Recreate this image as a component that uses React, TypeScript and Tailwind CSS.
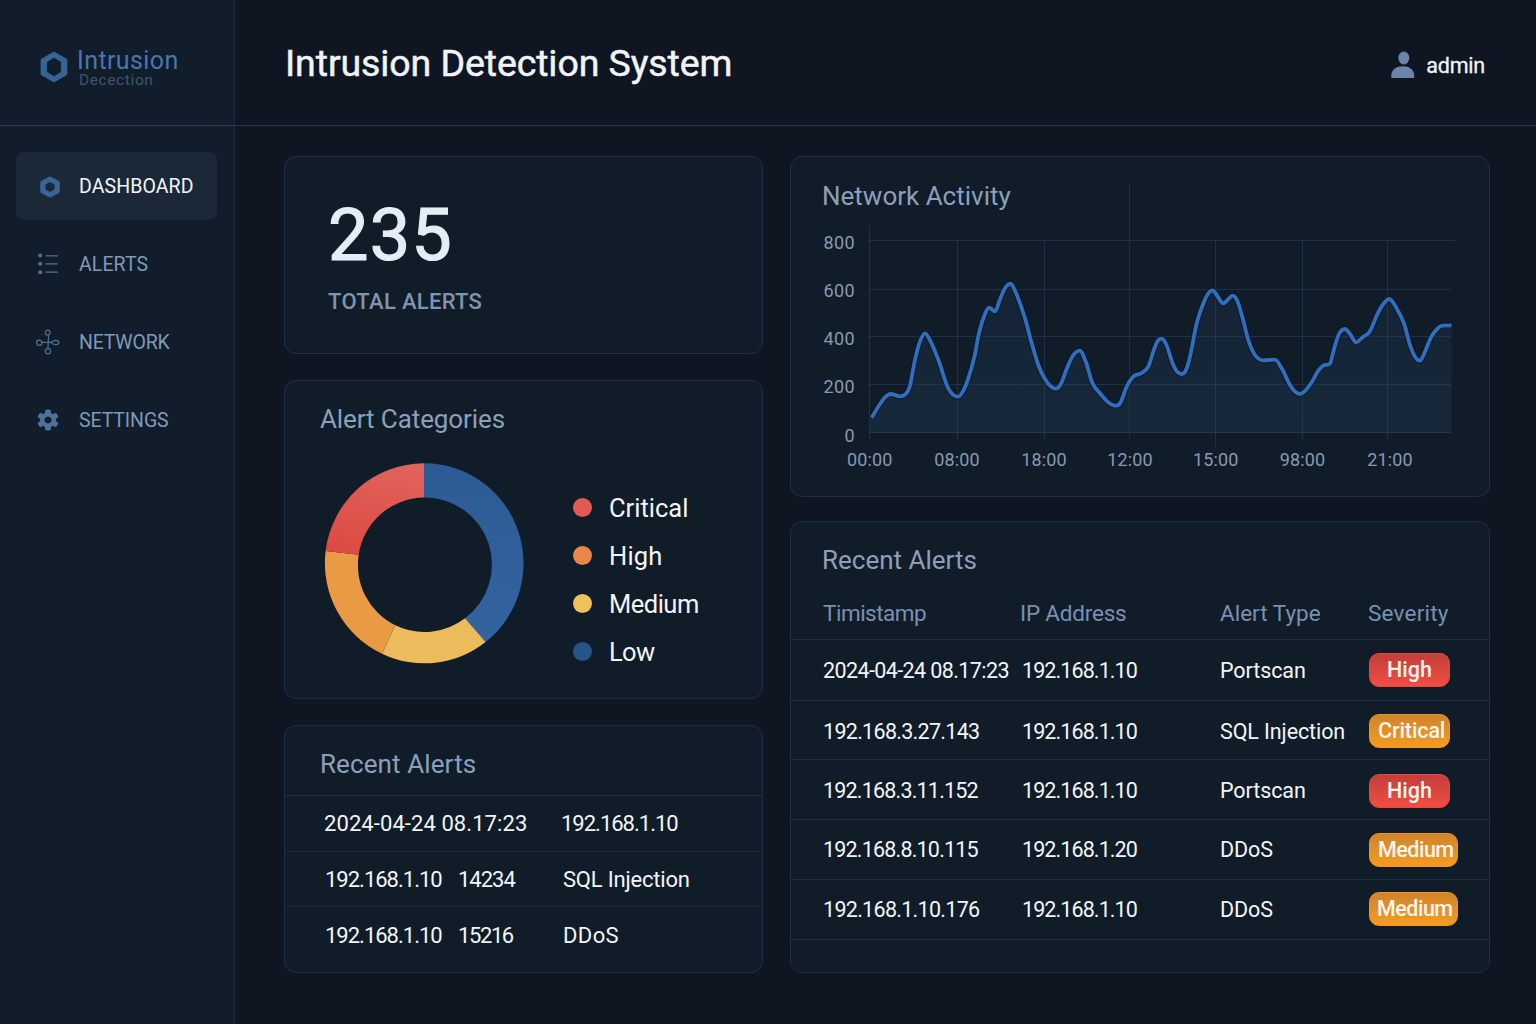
import type { ReactNode } from "react";

type Point = [number, number];

const activity: Point[] = [
  [871.7, 417.7], [880, 404], [885, 397.3], [890.7, 394], [900, 396.3], [905.7, 394], [909.7, 386.7], [915, 360],
  [919.3, 343.3], [925, 333.3], [930.7, 341.7], [939, 361.7], [947.7, 387.3], [952.7, 394.3], [958.3, 396.7],
  [963.3, 390.7], [968.3, 378.3], [974.3, 357.3], [979.3, 331.7], [985, 314], [989, 307.7], [995, 311.3],
  [1000, 299.3], [1005, 288.3], [1010.7, 283.7], [1015, 290.7], [1025, 318.3], [1031.7, 343.3], [1038.3, 365],
  [1045, 379], [1050.7, 386.3], [1056, 388.7], [1060.7, 384.3], [1066.7, 369], [1072.3, 356.7], [1079.7, 350.7],
  [1086, 362.3], [1092.3, 382.7], [1100, 393.3], [1108.3, 402.3], [1115, 405.7], [1120, 403.3], [1126.7, 386.7],
  [1133.3, 376.7], [1141.7, 373], [1148.3, 366.7], [1153.3, 351.7], [1157.3, 341.7], [1161.3, 338.7], [1166, 344],
  [1173.3, 365], [1177.3, 371.7], [1181.7, 374], [1185.7, 370.7], [1190, 356.7], [1196.7, 323.3], [1204, 301.7],
  [1208.3, 293.3], [1212.7, 290.3], [1216.7, 295], [1223.3, 303.3], [1228.3, 299.3], [1232.3, 295.7],
  [1237.3, 300.7], [1242.7, 318.3], [1248.3, 340], [1255, 355], [1263.3, 360.3], [1275, 359.7], [1281.7, 368.3],
  [1290, 385], [1295, 391.7], [1300, 394], [1304.3, 391.7], [1311.7, 382.3], [1318.3, 370.7], [1323.3, 365.7],
  [1330, 363.7], [1333.3, 351.7], [1339, 334], [1345, 329], [1350, 334], [1356, 342.3], [1363.3, 336.7],
  [1369.3, 332.3], [1377.3, 314.3], [1383.3, 304], [1389.3, 299], [1395.7, 306.7], [1404.3, 324.3], [1410, 345],
  [1415, 356.7], [1420, 360.7], [1425, 351.7], [1431, 337.3], [1436.7, 329.3], [1442.3, 325.7], [1451.5, 325.3],
];

// Monotone cubic interpolation, so peaks and troughs stay on their data points.
function smoothPath(pts: Point[]): string {
  const n = pts.length;
  const slope = (i: number) => (pts[i + 1][1] - pts[i][1]) / (pts[i + 1][0] - pts[i][0]);
  const tangents = pts.map((_, i) => {
    if (i === 0) return slope(0);
    if (i === n - 1) return 0;
    const a = slope(i - 1);
    const b = slope(i);
    if (a * b <= 0) return 0;
    const m = (a + b) / 2;
    const limit = 3 * Math.min(Math.abs(a), Math.abs(b));
    return Math.sign(m) * Math.min(Math.abs(m), limit);
  });
  let d = `M${pts[0][0]},${pts[0][1]}`;
  for (let i = 0; i < n - 1; i++) {
    const [x0, y0] = pts[i];
    const [x1, y1] = pts[i + 1];
    const h = (x1 - x0) / 3;
    d += `C${x0 + h},${y0 + tangents[i] * h} ${x1 - h},${y1 - tangents[i + 1] * h} ${x1},${y1}`;
  }
  return d;
}

const line = smoothPath(activity);
const area = `${line}L1451.5,433L870,433L870,420Z`;

const yTicks = [
  { label: "800", line: 240.5, base: 249, end: 1455 },
  { label: "600", line: 289.5, base: 297, end: 1451 },
  { label: "400", line: 336.5, base: 345.3, end: 1451 },
  { label: "200", line: 384.5, base: 393.3, end: 1451 },
  { label: "0", line: 432.5, base: 442.3, end: 1451 },
];

const xTicks = [
  { label: "00:00", x: 869.5, top: 225, bottom: 439, center: 869.7 },
  { label: "08:00", x: 957.5, top: 240, bottom: 439, center: 957 },
  { label: "18:00", x: 1044.5, top: 240, bottom: 439, center: 1044 },
  { label: "12:00", x: 1129.5, top: 184, bottom: 439, center: 1130 },
  { label: "15:00", x: 1215.5, top: 240, bottom: 447, center: 1215.7 },
  { label: "98:00", x: 1302.5, top: 240, bottom: 439, center: 1302.5 },
  { label: "21:00", x: 1387.5, top: 240, bottom: 439, center: 1390 },
];

function ActivityChart() {
  return (
    <svg className="block h-[296px] w-[698px]" viewBox="791 180 698 296" fill="none">
      <defs>
        <linearGradient id="area" x1="0" y1="283" x2="0" y2="433" gradientUnits="userSpaceOnUse">
          <stop offset="0" stopColor="#142336" />
          <stop offset="1" stopColor="#18283b" />
        </linearGradient>
      </defs>
      <path d={area} fill="url(#area)" />
      <g stroke="#2a4365" strokeOpacity="0.55">
        {yTicks.map((t) => (
          <path key={t.label} d={`M869,${t.line}H${t.end}`} />
        ))}
        {xTicks.map((t) => (
          <path key={t.label} d={`M${t.x},${t.top}V${t.bottom}`} strokeOpacity={t.top < 200 ? 0.45 : 0.55} />
        ))}
      </g>
      <path d={line} stroke="#0d1520" strokeWidth="6" strokeOpacity="0.6" />
      <path d={line} stroke="#2f6fbe" strokeWidth="3.8" />
      <g fill="#849ab5" fontSize="18">
        {yTicks.map((t) => (
          <text key={t.label} x="855" y={t.base} textAnchor="end" letterSpacing="0.4">
            {t.label}
          </text>
        ))}
        {xTicks.map((t) => (
          <text key={t.label} x={t.center} y="466" textAnchor="middle" letterSpacing="0.1">
            {t.label}
          </text>
        ))}
      </g>
    </svg>
  );
}

function Donut() {
  return (
    <svg className="block h-[202px] w-[200px]" viewBox="324 462 200 202">
      <defs>
        <linearGradient id="red" x1="0.6" y1="0" x2="0.3" y2="1">
          <stop offset="0" stopColor="#e0625a" />
          <stop offset="1" stopColor="#dd4a43" />
        </linearGradient>
        <linearGradient id="blue" x1="0" y1="0" x2="0" y2="1">
          <stop offset="0" stopColor="#2c5b95" />
          <stop offset="1" stopColor="#3463a0" />
        </linearGradient>
      </defs>
      <path d="M424 463.3A99 100 0 0 1 485.6 642L465 618.3A66.7 67 0 0 0 424 497.5Z" fill="url(#blue)" />
      <path d="M485.6 642A99 100 0 0 1 382 653.7L395.3 625.3A66.7 67 0 0 0 465 618.3Z" fill="#ebbb5c" />
      <path d="M382 653.7A99 100 0 0 1 325.6 551L358.7 554.7A66.7 67 0 0 0 395.3 625.3Z" fill="#e99a43" />
      <path d="M325.6 551A99 100 0 0 1 424 463.3V497.5A66.7 67 0 0 0 358.7 554.7Z" fill="url(#red)" />
    </svg>
  );
}

function LogoMark() {
  return (
    <svg className="block h-[32px] w-[28px]" viewBox="0 0 28 32">
      <path
        fill="#386495"
        stroke="#386495"
        strokeLinejoin="round"
        fillRule="evenodd"
        d="M14 1.100 26.900 8.400v15.200L14 30.900 1.100 23.600V8.400ZM14 6.200 6.600 10.800v10.400L14 25.800l7.400-4.600V10.800Z"
      />
    </svg>
  );
}

function HexagonIcon() {
  return (
    <svg className="mt-px ml-[2px] block h-[22px] w-[20px]" viewBox="0 0 20 22">
      <path
        fill="#3a6595"
        stroke="#3a6595"
        strokeLinejoin="round"
        fillRule="evenodd"
        d="M10 .8 19.200 5.700v10.600L10 21.200.8 16.300V5.700ZM10 5.500 5 8.300v5.400L10 16.500l5-2.800V8.300Z"
      />
    </svg>
  );
}

function ListIcon() {
  return (
    <svg className="block h-[22px] w-[22px]" viewBox="0 0 22 22" fill="none">
      <g fill="#50739b">
        <circle cx="2.200" cy="2.600" r="2" />
        <circle cx="2.200" cy="10.800" r="2" />
        <circle cx="2.200" cy="19.200" r="2" />
      </g>
      <path d="M8 2.800H19.500M8 10.900H19.500M8 19.200H19.500" stroke="#50739b" strokeWidth="1.200" strokeLinecap="round" />
    </svg>
  );
}

function NetworkIcon() {
  return (
    <svg className="-ml-[2px] block h-[26px] w-[24px]" viewBox="0 0 24 26" fill="none" stroke="#50739b" strokeWidth="1.200">
      <ellipse cx="11.700" cy="3.600" rx="2.400" ry="2.500" />
      <ellipse cx="12" cy="22.200" rx="2.600" ry="2.500" />
      <circle cx="3.200" cy="13.800" r="2.600" />
      <path d="M5.800 13.300H15C16.500 12 18 11.400 19.800 11.400C23.800 11.500 23.800 15.700 19.800 15.700C18 15.700 16.500 14.800 15 13.300M12.600 6.100 11.900 19.700" />
    </svg>
  );
}

// Six-toothed gear outline centred on (11, 11).
const gear = Array.from({ length: 6 }, (_, i) => {
  const a = i * 60 - 90;
  return [
    [7.3, a - 20],
    [10.2, a - 12],
    [10.2, a + 12],
    [7.3, a + 20],
  ]
    .map(([r, deg]) => {
      const t = (deg * Math.PI) / 180;
      return `${(11 + r * 1.04 * Math.cos(t)).toFixed(2)},${(11 + r * Math.sin(t)).toFixed(2)}`;
    })
    .join("L");
}).join("L");

function GearIcon() {
  return (
    <svg className="-mt-px -ml-px block h-[22px] w-[22px]" viewBox="0 0 22 22">
      <path
        fill="#50739b"
        fillRule="evenodd"
        stroke="#50739b"
        strokeWidth="0.8"
        strokeLinejoin="round"
        d={`M${gear}ZM11 6.900 7.200 9v4l3.800 2.100L14.800 13V9Z`}
      />
    </svg>
  );
}

function UserIcon() {
  return (
    <svg className="block h-[28px] w-[24px]" viewBox="0 0 24 28" fill="#6b85a9">
      <ellipse cx="12.800" cy="7" rx="5.500" ry="6.500" />
      <path d="M.3 27V23.500C.8 18.500 5.500 15.200 11.800 15.200S22.800 18.500 23.200 23.500V27Z" />
    </svg>
  );
}

function Card({ className, children }: { className: string; children: ReactNode }) {
  return (
    <section className={`overflow-hidden rounded-xl border border-[#1d304a] bg-[#111c29] ${className}`}>
      {children}
    </section>
  );
}

function CardTitle({ className, children }: { className: string; children: ReactNode }) {
  return <h2 className={`whitespace-nowrap text-[26px] leading-none text-[#8ba0ba] ${className}`}>{children}</h2>;
}

const nav = [
  { label: "DASHBOARD", icon: <HexagonIcon />, active: true, tracking: "tracking-[0.1px]" },
  { label: "ALERTS", icon: <ListIcon />, active: false, tracking: "tracking-[0.1px]" },
  { label: "NETWORK", icon: <NetworkIcon />, active: false, tracking: "tracking-[-0.200px]" },
  { label: "SETTINGS", icon: <GearIcon />, active: false, tracking: "tracking-[-0.100px]" },
];

const legend = [
  { label: "Critical", dot: "bg-[#e25a54]", tracking: "tracking-[0px]" },
  { label: "High", dot: "bg-[#e98648]", tracking: "tracking-[0.2px]" },
  { label: "Medium", dot: "bg-[#efc05e]", tracking: "tracking-[-0.500px]" },
  { label: "Low", dot: "bg-[#275489]", tracking: "tracking-[-0.700px]" },
];

const red = "border-[#e8473f] from-[#c23f3a] to-[#f24d43]";
const orange = "border-[#f0951f] from-[#d0842b] to-[#f59b20]";

const alerts = [
  { time: "2024-04-24 08.17:23", ip: "192.168.1.10", type: "Portscan", level: "High", badge: `w-[81px] justify-center ${red}`, row: "h-[61px]", timeTracking: "tracking-[-0.600px]" },
  { time: "192.168.3.27.143", ip: "192.168.1.10", type: "SQL Injection", level: "Critical", badge: `w-[81px] pl-[8px] tracking-[-0.100px] ${orange}`, row: "h-[59px] pt-[2px]", timeTracking: "tracking-[-0.700px]" },
  { time: "192.168.3.11.152", ip: "192.168.1.10", type: "Portscan", level: "High", badge: `w-[81px] justify-center ${red}`, row: "h-[60px] pt-[2px]", timeTracking: "tracking-[-0.800px]" },
  { time: "192.168.8.10.115", ip: "192.168.1.20", type: "DDoS", level: "Medium", badge: `w-[89px] pl-[8px] tracking-[-0.500px] ${orange}`, row: "h-[60px]", timeTracking: "tracking-[-0.800px]" },
  { time: "192.168.1.10.176", ip: "192.168.1.10", type: "DDoS", level: "Medium", badge: `w-[89px] pl-[7px] tracking-[-0.500px] ${orange}`, row: "h-[60px] pb-px", timeTracking: "tracking-[-0.700px]" },
];

export default function App() {
  return (
    <div className="flex h-[1024px] w-[1536px] overflow-hidden bg-[#0f1621] font-['Roboto','Liberation_Sans',sans-serif] text-[#f1f5fa]">
      <aside className="flex w-[235px] flex-col border-r border-[#1d2f45] bg-[#111d2a]">
        <div className="flex h-[126px] border-b border-[#2a3f57] pt-[51px] pl-[40px]">
          <LogoMark />
          <div className="-mt-[2px] ml-[9px]">
            <div className="text-[25px] leading-[24px] tracking-[0.400px] text-[#4a76ae]">Intrusion</div>
            <div className="-mt-px ml-[2px] text-[15.500px] leading-[16px] tracking-[0.600px] text-[#42546d]">Decection</div>
          </div>
        </div>
        <nav className="mt-[26px] ml-[16px] flex flex-col gap-[10px]">
          {nav.map((item) => (
            <div
              key={item.label}
              className={`flex h-[68px] w-[201px] items-center rounded-lg pl-[22px] ${item.active ? "bg-[#1b2838]" : "text-[#7f9ab9]"}`}
            >
              <span className="flex w-[41px] shrink-0">{item.icon}</span>
              <span className={`pt-[2px] text-[19.500px] leading-none ${item.tracking}`}>{item.label}</span>
            </div>
          ))}
        </nav>
      </aside>

      <div className="flex flex-1 flex-col">
        <header className="flex h-[126px] justify-between border-b border-[#24384f] pt-[45px] pr-[51px] pl-[50px]">
          <h1 className="text-[37.500px] leading-none tracking-[-0.100px] [-webkit-text-stroke:0.500px_#eaf0f7]">Intrusion Detection System</h1>
          <div className="mt-[6px] flex h-[28px] items-center gap-[11px]">
            <UserIcon />
            <span className="pt-[2px] text-[21.500px] leading-none tracking-[-0.200px] [-webkit-text-stroke:0.300px_#eaf0f7]">admin</span>
          </div>
        </header>

        <main className="flex gap-[27px] pt-[30px] pl-[49px]">
          <div className="flex w-[479px] flex-col">
            <Card className="h-[198px] pt-[43px] pl-[43px]">
              <div className="text-[72px] leading-none tracking-[1.200px] text-[#e4edf4] [-webkit-text-stroke:1.200px_#e4edf4]">235</div>
              <div className="mt-[19px] text-[22px] leading-none font-medium tracking-[0.300px] text-[#7f95af]">TOTAL ALERTS</div>
            </Card>

            <Card className="mt-[26px] h-[319px] pt-[25px] pl-[35px]">
              <CardTitle className="tracking-[-0.100px]">Alert Categories</CardTitle>
              <div className="mt-[30px] ml-[4px] flex">
                <Donut />
                <ul className="mt-[21px] ml-[49px] flex flex-col">
                  {legend.map((item) => (
                    <li key={item.label} className="flex h-[48px] items-center gap-[17px]">
                      <span className={`size-[19px] rounded-full ${item.dot}`} />
                      <span className={`pt-[3px] text-[25.500px] leading-none ${item.tracking}`}>{item.label}</span>
                    </li>
                  ))}
                </ul>
              </div>
            </Card>

            <Card className="mt-[26px] h-[248px] text-[22px] leading-none">
              <div className="h-[70px] border-b border-[#1d2f45] pt-[25px] pl-[35px]">
                <CardTitle className="tracking-[0.100px]">Recent Alerts</CardTitle>
              </div>
              <div className="flex h-[56px] items-center border-b border-[#1a2a3d] pl-[39px]">
                <span className="w-[237px] tracking-[0.080px]">2024-04-24 08.17:23</span>
                <span className="tracking-[-1px]">192.168.1.10</span>
              </div>
              <div className="flex h-[55px] items-center border-b border-[#1a2a3d] pt-[2px] pl-[40px]">
                <span className="w-[133px] tracking-[-1px]">192.168.1.10</span>
                <span className="w-[105px] tracking-[-1px]">14234</span>
                <span className="tracking-[-0.200px]">SQL Injection</span>
              </div>
              <div className="flex h-[56px] items-center pt-[2px] pl-[40px]">
                <span className="w-[133px] tracking-[-1px]">192.168.1.10</span>
                <span className="w-[105px] tracking-[-1.400px]">15216</span>
                <span className="tracking-[0.400px]">DDoS</span>
              </div>
            </Card>
          </div>

          <div className="flex w-[700px] flex-col">
            <Card className="relative h-[341px] pt-[23px]">
              <CardTitle className="absolute top-[26px] left-[31px]">Network Activity</CardTitle>
              <ActivityChart />
            </Card>

            <Card className="mt-[24px] h-[452px] text-[21.500px] leading-none">
              <CardTitle className="mt-[25px] ml-[31px]">Recent Alerts</CardTitle>
              <div className="flex h-[67px] border-b border-[#1d2f45] pt-[29px] pl-[32px] text-[22.500px] text-[#7890b3]">
                <span className="w-[197px] tracking-[-0.500px]">Timistamp</span>
                <span className="w-[200px] tracking-[-0.200px]">IP Address</span>
                <span className="w-[148px]">Alert Type</span>
                <span className="tracking-[0.200px]">Severity</span>
              </div>
              {alerts.map((a, i) => (
                <div key={i} className={`flex items-center border-b border-[#1d2f45] pl-[32px] ${a.row}`}>
                  <span className={`w-[199px] pt-px ${a.timeTracking}`}>{a.time}</span>
                  <span className="w-[198px] pt-px tracking-[-0.900px]">{a.ip}</span>
                  <span className="w-[149px] pt-px tracking-[-0.100px]">{a.type}</span>
                  <span className={`flex h-[34px] items-center rounded-[10px] border bg-linear-to-b font-medium text-[#fdf6f1] ${a.badge}`}>
                    {a.level}
                  </span>
                </div>
              ))}
            </Card>
          </div>
        </main>
      </div>
    </div>
  );
}
